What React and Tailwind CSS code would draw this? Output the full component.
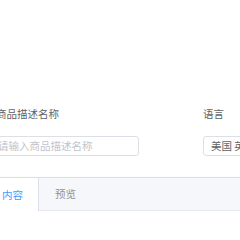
export default function App() {
  const font = { fontFamily: '"Noto Sans CJK SC", "Noto Sans", sans-serif' };
  return (
    <div className="w-[240px] h-[240px] overflow-hidden bg-white" style={font}>
      <div className="pt-[106px] flex">
        <div className="ml-[-14px] w-[153px] shrink-0">
          <div className="pl-[10px] text-[10.5px] leading-[15px] text-[#606266] whitespace-nowrap">商品描述名称</div>
          <div className="mt-[15px] h-[20px] border border-[#dcdfe6] rounded-[3px] flex items-center pl-[11px] text-[10.5px] text-[#c0c4cc] whitespace-nowrap">请输入商品描述名称</div>
        </div>
        <div className="ml-[64px] w-[120px] shrink-0">
          <div className="text-[10.5px] leading-[15px] text-[#606266] whitespace-nowrap">语言</div>
          <div className="mt-[15px] h-[20px] border border-[#dcdfe6] rounded-[3px] flex items-center pl-[7px] text-[10.5px] text-[#606266] whitespace-nowrap">美国 英语</div>
        </div>
      </div>
      <div className="mt-[21px] ml-[-30px] w-[300px] border border-[#dcdfe6] shadow-[0_1px_3px_rgba(0,0,0,0.08)]">
        <div className="flex h-[33px] bg-[#f5f7fa] border-b border-[#e4e7ed]">
          <div className="h-[33px] -mb-px bg-white border-r border-[#dcdfe6] pl-[15px] pr-[15px] flex items-center text-[10.5px] text-[#409eff] w-[68px] justify-end">内容</div>
          <div className="px-[16px] flex items-center text-[10.5px] text-[#909399]">预览</div>
        </div>
        <div className="h-[40px] bg-white"></div>
      </div>
    </div>
  );
}
